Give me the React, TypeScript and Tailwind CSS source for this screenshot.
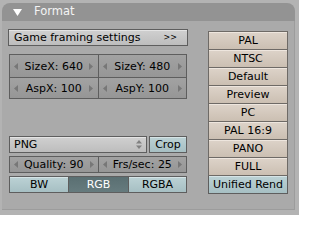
import React from 'react'

const FONT = { fontFamily: '"DejaVu Sans", "Liberation Sans", sans-serif' }

const PRESETS = ['PAL', 'NTSC', 'Default', 'Preview', 'PC', 'PAL 16:9', 'PANO', 'FULL']

function Arrow({ dir }: { dir: 'l' | 'r' }) {
  return (
    <svg width="4" height="7" viewBox="0 0 4 7" className="shrink-0">
      {dir === 'l' ? <polygon points="4,0 4,7 0,3.5" fill="#777" /> : <polygon points="0,0 0,7 4,3.5" fill="#777" />}
    </svg>
  )
}

function NumField({ label, value, className = '' }: { label: string; value: number; className?: string }) {
  return (
    <div className={`flex items-center justify-between px-[4px] bg-gradient-to-b from-[#a2a2a2] to-[#969696] ${className}`}>
      <Arrow dir="l" />
      <span className="text-[11px] text-black leading-none">
        {label}: {value}
      </span>
      <Arrow dir="r" />
    </div>
  )
}

export default function App() {
  return (
    <div className="w-[299px] h-[215px] bg-[#b3b3b3] pt-[3px] pl-[2px]" style={FONT}>
      <div className="w-[293px] h-[207px] flex flex-col">
        {/* header */}
        <div className="h-[18px] shrink-0 bg-[#939393] rounded-t-[8px] flex items-center pl-[11px]">
          <svg width="9" height="7" viewBox="0 0 9 7">
            <polygon points="0,0 9,0 4.5,7" fill="#fff" />
          </svg>
          <span className="ml-[12px] text-[11.5px] text-[#f4f4f4] leading-none">Format</span>
        </div>

        {/* body */}
        <div className="flex-1 bg-[#aaaaaa] border-r border-b border-[#9c9c9c] flex pl-[6px] pt-[8px]">
          <div className="w-[180px] flex flex-col">
            <div className="h-[17px] flex items-center justify-between pl-[5px] pr-[10px] border border-[#5e5e5e] bg-gradient-to-b from-[#d0d0d0] to-[#bdbdbd] shadow-[inset_0_1px_0_#e4e4e4]">
              <span className="text-[11px] text-black leading-none">Game framing settings</span>
              <span className="text-[8px] text-black leading-none">&gt;&gt;</span>
            </div>

            <div className="mt-[8px] ml-[1px] w-[178px] grid grid-cols-2 border border-[#5e5e5e] bg-[#5e5e5e] gap-[1px]">
              <NumField label="SizeX" value={640} className="h-[22px]" />
              <NumField label="SizeY" value={480} className="h-[22px]" />
              <NumField label="AspX" value={100} className="h-[20px]" />
              <NumField label="AspY" value={100} className="h-[20px]" />
            </div>

            <div className="mt-[37px] ml-[1px] w-[178px] flex gap-[2px] h-[17px]">
              <div className="w-[138px] flex items-center justify-between pl-[4px] pr-[4px] border border-[#5e5e5e] bg-gradient-to-b from-[#d0d0d0] to-[#bdbdbd] shadow-[inset_0_1px_0_#e4e4e4]">
                <span className="text-[11px] text-black leading-none">PNG</span>
                <svg width="6" height="9" viewBox="0 0 6 9">
                  <polygon points="0,3.5 6,3.5 3,0" fill="#808080" />
                  <polygon points="0,5.5 6,5.5 3,9" fill="#808080" />
                </svg>
              </div>
              <div className="flex-1 flex items-center justify-center border border-[#5e5e5e] bg-gradient-to-b from-[#bcd2d5] to-[#a6bfc3] shadow-[inset_0_1px_0_#d6e4e6]">
                <span className="text-[11px] text-black leading-none">Crop</span>
              </div>
            </div>

            <div className="mt-[3px] ml-[1px] w-[178px] h-[17px] grid grid-cols-2 border border-[#5e5e5e] bg-[#5e5e5e] gap-[1px]">
              <NumField label="Quality" value={90} />
              <NumField label="Frs/sec" value={25} />
            </div>

            <div className="mt-[3px] ml-[1px] w-[178px] h-[17px] flex border border-[#5e5e5e] bg-[#5e5e5e] gap-[1px]">
              <div className="w-[58px] flex items-center justify-center bg-gradient-to-b from-[#bcd2d5] to-[#a6bfc3] shadow-[inset_0_1px_0_#d6e4e6]">
                <span className="text-[11px] text-black leading-none">BW</span>
              </div>
              <div className="w-[59px] flex items-center justify-center bg-gradient-to-b from-[#5a6f72] to-[#667b7e]">
                <span className="text-[11px] text-white leading-none">RGB</span>
              </div>
              <div className="flex-1 flex items-center justify-center bg-gradient-to-b from-[#bcd2d5] to-[#a6bfc3] shadow-[inset_0_1px_0_#d6e4e6]">
                <span className="text-[11px] text-black leading-none">RGBA</span>
              </div>
            </div>
          </div>

          <div className="ml-[20px] mt-[2px] w-[80px] flex flex-col border-t border-[#6e6a66]">
            {PRESETS.map((p) => (
              <div
                key={p}
                className="h-[18px] flex items-center justify-center border-x border-b border-[#6e6a66] bg-gradient-to-b from-[#ddd3c9] to-[#cbbfb2] shadow-[inset_0_1px_0_#eee6de]"
              >
                <span className="text-[11px] text-black leading-none">{p}</span>
              </div>
            ))}
            <div className="h-[18px] flex items-center justify-center border-x border-b border-[#5e5e5e] bg-gradient-to-b from-[#bcd2d5] to-[#a6bfc3] shadow-[inset_0_1px_0_#d6e4e6]">
              <span className="text-[11px] text-black leading-none">Unified Rend</span>
            </div>
          </div>
        </div>
      </div>
    </div>
  )
}
